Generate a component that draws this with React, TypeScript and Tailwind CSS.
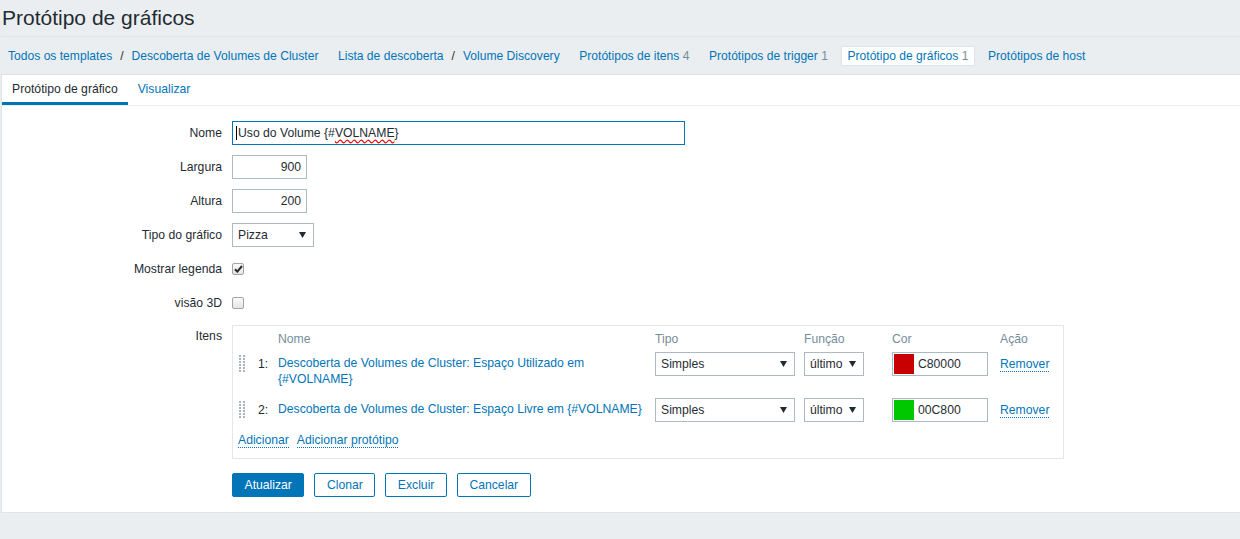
import React from "react";

const LINK = "text-[#0275b8]";

const Arrow = () => (
  <svg width="7" height="6" viewBox="0 0 7 6" className="shrink-0">
    <path d="M0 0h7L3.5 6z" fill="#1f2c33" />
  </svg>
);

const Handle = () => (
  <svg width="6" height="17" viewBox="0 0 6 17">
    {[0, 3, 6, 9, 12, 15].map((y) =>
      [0, 4].map((x) => <rect key={`${x}-${y}`} x={x} y={y} width="2" height="2" fill="#aab6bd" />)
    )}
  </svg>
);

const Select = ({ value, width }: { value: string; width: string }) => (
  <div
    className={`${width} h-[24px] border border-[#acbbc2] bg-white flex items-center justify-between pl-[5px] pr-[7px]`}
  >
    <span>{value}</span>
    <Arrow />
  </div>
);

const Checkbox = ({ checked }: { checked?: boolean }) => (
  <div className="w-[12px] h-[12px] rounded-[2px] border border-[#a3a3a3] bg-gradient-to-b from-[#fafafa] to-[#e4e4e4] flex items-center justify-center">
    {checked && (
      <svg width="9" height="8" viewBox="0 0 9 8">
        <path d="M1 4.2 3.3 6.6 8 1" stroke="#2a2a2a" strokeWidth="2" fill="none" />
      </svg>
    )}
  </div>
);

const DottedLink = ({ children }: { children: React.ReactNode }) => (
  <span className={`${LINK} inline-block leading-[14px] border-b border-dotted border-[#0275b8]`}>{children}</span>
);

const Row = ({ label, children, top }: { label: string; children: React.ReactNode; top?: boolean }) => (
  <div className={`flex ${top ? "items-start" : "items-center min-h-[24px]"} mb-[10px]`}>
    <div className={`w-[220px] text-right ${top ? "pt-[3px] leading-[16px]" : ""}`}>{label}</div>
    <div className="ml-[10px]">{children}</div>
  </div>
);

const items = [
  { n: "1:", name: "Descoberta de Volumes de Cluster: Espaço Utilizado em {#VOLNAME}", color: "C80000", bg: "bg-[#c80000]" },
  { n: "2:", name: "Descoberta de Volumes de Cluster: Espaço Livre em {#VOLNAME}", color: "00C800", bg: "bg-[#00c800]" },
];

const COLS = "grid grid-cols-[20px_20px_377px_149px_88px_108px_60px]";

export default function App() {
  return (
    <div className="min-h-[539px] bg-[#ebeef0] pl-[1px] font-['Liberation_Sans',Arial,sans-serif] text-[12.2px] text-[#1f2c33]">
      {/* Title */}
      <h1 className="h-[37px] border-b border-[#dfe4e7] pl-[1px] text-[21px] leading-[36px] font-normal">
        Protótipo de gráficos
      </h1>

      {/* Navigation */}
      <div className="h-[38px] border-b border-[#dfe4e7] pl-[1px] pt-[1px] flex items-center gap-[7.5px] text-[12.1px]">
        <div className="h-[20px] px-[6px] flex items-center">
          <span className={LINK}>Todos os templates</span>
          <span className="px-[8px]">/</span>
          <span className={LINK}>Descoberta de Volumes de Cluster</span>
        </div>
        <div className="h-[20px] px-[6px] flex items-center">
          <span className={LINK}>Lista de descoberta</span>
          <span className="px-[8px]">/</span>
          <span className={LINK}>Volume Discovery</span>
        </div>
        <div className={`h-[20px] px-[6px] flex items-center ${LINK}`}>
          Protótipos de itens&nbsp;<span className="text-[#768d99]">4</span>
        </div>
        <div className={`h-[20px] px-[6px] flex items-center ${LINK}`}>
          Protótipos de trigger&nbsp;<span className="text-[#768d99]">1</span>
        </div>
        <div className={`h-[20px] px-[5px] flex items-center bg-white border border-[#dfe4e7] rounded-[2px] ${LINK}`}>
          Protótipo de gráficos&nbsp;<span className="text-[#768d99]">1</span>
        </div>
        <div className={`h-[20px] px-[6px] flex items-center ${LINK}`}>Protótipos de host</div>
      </div>

      {/* Panel */}
      <div className="bg-white border-l border-b border-[#dfe4e7] pb-[15px]">
        <div className="flex h-[31px] border-b border-[#ebeef0]">
          <div className="h-[30px] px-[10px] flex items-center border-b-[3px] border-[#0275b8] pt-[2px]">
            Protótipo de gráfico
          </div>
          <div className={`h-[30px] px-[10px] flex items-center pb-[1px] ${LINK}`}>Visualizar</div>
        </div>

        <div className="pt-[15px]">
          <Row label="Nome">
            <div className="w-[453px] h-[24px] border border-[#0275b8] flex items-center pl-[3px]">
              <span className="inline-block w-[1px] h-[14px] bg-black mr-[1px]" />
              <span>
                Uso do Volume {"{#"}
                <span className="underline decoration-wavy decoration-[#e00] underline-offset-[2px]">VOLNAME</span>
                {"}"}
              </span>
            </div>
          </Row>
          <Row label="Largura">
            <div className="w-[75px] h-[24px] border border-[#acbbc2] text-right pr-[5px] leading-[22px]">900</div>
          </Row>
          <Row label="Altura">
            <div className="w-[75px] h-[24px] border border-[#acbbc2] text-right pr-[5px] leading-[22px]">200</div>
          </Row>
          <Row label="Tipo do gráfico">
            <Select value="Pizza" width="w-[82px]" />
          </Row>
          <Row label="Mostrar legenda">
            <div className="h-[24px] flex items-center">
              <Checkbox checked />
            </div>
          </Row>
          <Row label="visão 3D">
            <div className="h-[24px] flex items-center">
              <Checkbox />
            </div>
          </Row>
          <Row label="Itens" top>
            <div className="w-[832px] border border-[#e3e7ea] pl-[5px] pt-[5px] pb-[10px]">
              <div className={`${COLS} leading-[16px] text-[#768d99]`}>
                <div />
                <div />
                <div>Nome</div>
                <div>Tipo</div>
                <div>Função</div>
                <div>Cor</div>
                <div>Ação</div>
              </div>
              {items.map((it, i) => (
                <div key={it.n} className={`${COLS} items-start ${i === 0 ? "mt-[5px]" : "mt-[11px]"}`}>
                  <div className="pt-[3px] pl-[1px]">
                    <Handle />
                  </div>
                  <div className="pt-[4px] leading-[16px]">{it.n}</div>
                  <div className={`pt-[3px] leading-[16px] w-[370px] ${LINK}`}>{it.name}</div>
                  <Select value="Simples" width="w-[140px]" />
                  <Select value="último" width="w-[60px]" />
                  <div className="w-[96px] h-[24px] border border-[#acbbc2] flex items-center pl-[1px]">
                    <div className={`w-[20px] h-[20px] ${it.bg}`} />
                    <span className="ml-[4px]">{it.color}</span>
                  </div>
                  <div className="pt-[3px]">
                    <DottedLink>Remover</DottedLink>
                  </div>
                </div>
              ))}
              <div className="mt-[11px] flex gap-[8px]">
                <DottedLink>Adicionar</DottedLink>
                <DottedLink>Adicionar protótipo</DottedLink>
              </div>
            </div>
          </Row>

          <div className="flex mt-[14px]">
            <div className="w-[230px]" />
            <div className="flex gap-[10px]">
              <button className="h-[24px] px-[11.5px] rounded-[2px] bg-[#0275b8] border border-[#0275b8] text-white">
                Atualizar
              </button>
              {["Clonar", "Excluir", "Cancelar"].map((b) => (
                <button
                  key={b}
                  className={`h-[24px] px-[11.5px] rounded-[2px] bg-white border border-[#0275b8] ${LINK}`}
                >
                  {b}
                </button>
              ))}
            </div>
          </div>
        </div>
      </div>
    </div>
  );
}
